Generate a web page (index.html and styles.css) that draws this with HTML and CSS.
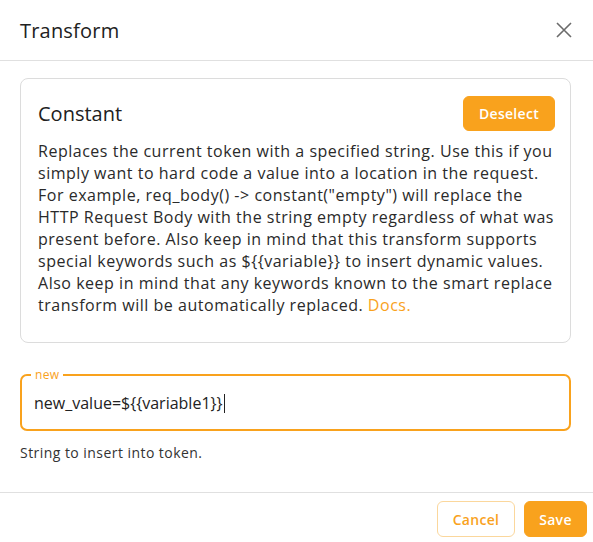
FILE: index.html
```html
<!DOCTYPE html>
<html>
<head>
<meta charset="utf-8">
<link rel="stylesheet" href="styles.css">
</head>
<body>
<div class="dialog">
  <div class="header">
    <h1 class="title">Transform</h1>
    <button class="close" aria-label="close">
      <svg width="16" height="16" viewBox="0 0 16 16"><path d="M1 1L15 15M15 1L1 15" stroke="#6b6b6b" stroke-width="1.6" fill="none"/></svg>
    </button>
  </div>
  <div class="content">
    <div class="card">
      <div class="card-head">
        <h2 class="card-title">Constant</h2>
        <button class="btn btn-primary deselect">Deselect</button>
      </div>
      <p class="desc">Replaces the current token with a specified string. Use this if you<br>simply want to hard code a value into a location in the request.<br>For example, req_body() -&gt; constant("empty") will replace the<br>HTTP Request Body with the string empty regardless of what was<br>present before. Also keep in mind that this transform supports<br>special keywords such as ${{variable}} to insert dynamic values.<br>Also keep in mind that any keywords known to the smart replace<br>transform will be automatically replaced. <a class="link">Docs.</a></p>
    </div>
    <div class="field">
      <fieldset class="outline"><legend class="legend">new</legend></fieldset>
      <div class="input">new_value=${{variable1}}<span class="caret"></span></div>
    </div>
    <div class="helper">String to insert into token.</div>
  </div>
  <div class="footer">
    <button class="btn btn-outline">Cancel</button>
    <button class="btn btn-primary">Save</button>
  </div>
</div>
</body>
</html>
```
FILE: styles.css
```css
* { box-sizing: border-box; }
html, body { margin: 0; padding: 0; background: #fff; }
body { font-family: "Open Sans", "Noto Sans", sans-serif; color: #212121; width: 593px; height: 542px; overflow: hidden; }
.dialog { display: flex; flex-direction: column; height: 542px; }
.header { display: flex; align-items: center; justify-content: space-between; height: 61px; padding: 0 21px 0 20px; border-bottom: 1px solid #e0e0e0; }
.title { margin: 0; font-size: 20px; font-weight: 500; letter-spacing: 0.2px; }
.close { background: none; border: 0; padding: 0; width: 16px; height: 16px; display: flex; }
.content { padding: 17px 22px 0 20px; flex: 1; }
.card { border: 1px solid #dcdcdc; border-radius: 8px; padding: 17px 15px 22px 17px; height: 265px; }
.card-head { display: flex; justify-content: space-between; align-items: center; height: 35px; margin-bottom: 9px; }
.card-title { margin: 0; font-size: 20px; font-weight: 500; }
.desc { margin: 0; font-size: 16px; line-height: 22px; letter-spacing: 0.52px; white-space: nowrap; color: #2a2a2a; }
.link { color: #f9a21d; }
.btn { font-family: inherit; font-size: 14px; font-weight: 600; border-radius: 6px; height: 36px; padding: 0 16px; cursor: pointer; letter-spacing: 0.3px; }
.btn-primary { background: #f9a21d; color: #fff; border: 1px solid #f9a21d; }
.deselect { height: 35px; width: 92px; padding: 0; }
.field { position: relative; margin-top: 32px; height: 56px; }
.outline { position: absolute; inset: -6px 0 0 0; margin: 0; padding: 0 9px; border: 2px solid #f9a21d; border-radius: 7px; }
.legend { font-size: 12px; color: #f9a21d; padding: 0 4px; line-height: 12px; letter-spacing: 0.3px; }
.input { padding: 17px 14px 14px; font-size: 16px; line-height: 22px; color: #222; display: flex; align-items: center; }
.caret { display: inline-block; width: 1px; height: 19px; background: #222; margin-left: 1px; }
.helper { font-size: 14px; color: #333; margin-top: 12px; letter-spacing: 0.45px; }
.footer { display: flex; justify-content: flex-end; gap: 9px; padding: 8px 6px 5px 0; border-top: 1px solid #e0e0e0; height: 50px; }
.btn-outline { background: #fff; color: #f9a21d; border: 1px solid #fbd79c; width: 78px; padding: 0; }
.footer .btn-primary { width: 63px; padding: 0; }
```
